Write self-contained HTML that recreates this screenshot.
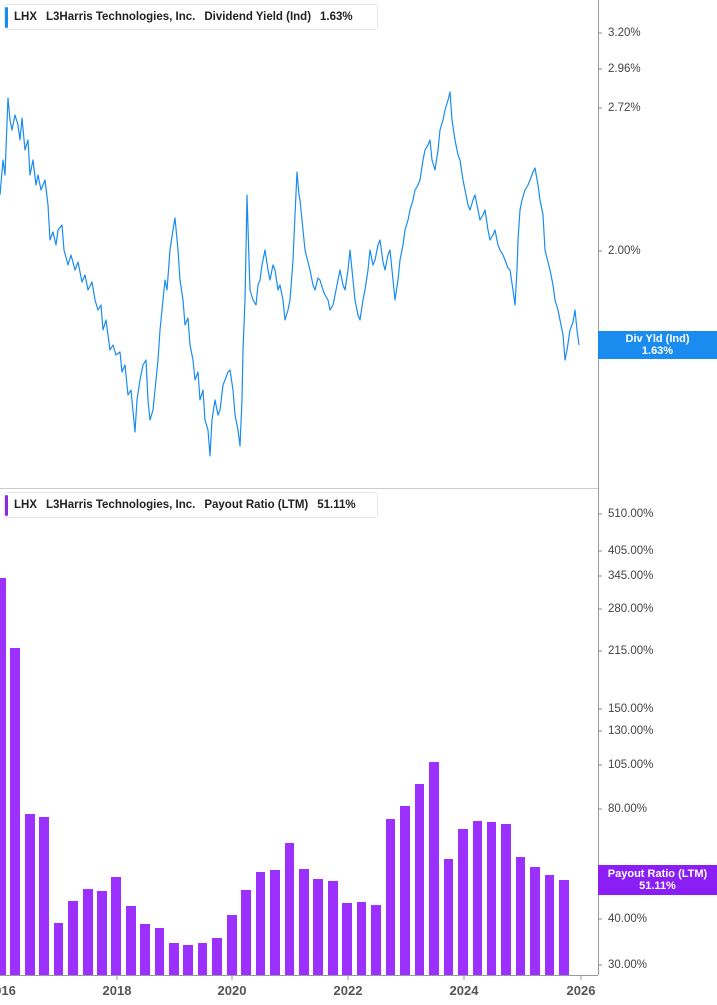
<!DOCTYPE html>
<html><head><meta charset="utf-8"><style>
body{margin:0;width:717px;height:1005px;background:#fff;font-family:"Liberation Sans",Arial,sans-serif;overflow:hidden;position:relative}
.leg{position:absolute;left:4px;height:26px;border:1px solid #e6e6e6;border-radius:3px;background:#fff;font-size:11.5px;font-weight:bold;color:#222;line-height:24px;padding-left:9px;box-sizing:border-box;white-space:nowrap;overflow:hidden}
.leg:before{content:"";position:absolute;left:0;top:2px;width:3px;height:21px;border-radius:2px}
.l1:before{background:#1a8cf0}.l2:before{background:#8a2be2}
.leg span{margin-right:9px}
.lab{position:absolute;left:608px;font-size:11.5px;color:#444;transform:translateY(-50%)}
.xl{position:absolute;top:983px;font-size:13px;font-weight:bold;color:#555;transform:translateX(-50%)}
.badge{position:absolute;left:598px;width:119px;color:#fff;font-size:11px;font-weight:bold;text-align:center;line-height:12px}
</style></head><body>
<svg width="717" height="1005" style="position:absolute;left:0;top:0">
<line x1="598.5" y1="0" x2="598.5" y2="975" stroke="#999"/>
<line x1="0" y1="488.5" x2="598" y2="488.5" stroke="#ccc"/>
<line x1="0" y1="975.5" x2="598" y2="975.5" stroke="#999"/>
<g stroke="#999">
<line x1="117" y1="975" x2="117" y2="980"/><line x1="232" y1="975" x2="232" y2="980"/><line x1="348" y1="975" x2="348" y2="980"/><line x1="464" y1="975" x2="464" y2="980"/><line x1="581" y1="975" x2="581" y2="980"/>
</g>
<g stroke="#888">
<line x1="598" y1="33" x2="602" y2="33"/><line x1="598" y1="69" x2="602" y2="69"/><line x1="598" y1="108" x2="602" y2="108"/><line x1="598" y1="251" x2="602" y2="251"/>
<line x1="598" y1="514" x2="602" y2="514"/><line x1="598" y1="551" x2="602" y2="551"/><line x1="598" y1="576" x2="602" y2="576"/><line x1="598" y1="609" x2="602" y2="609"/><line x1="598" y1="651" x2="602" y2="651"/><line x1="598" y1="709" x2="602" y2="709"/><line x1="598" y1="731" x2="602" y2="731"/><line x1="598" y1="765" x2="602" y2="765"/><line x1="598" y1="809" x2="602" y2="809"/><line x1="598" y1="919" x2="602" y2="919"/><line x1="598" y1="965" x2="602" y2="965"/>
</g>
<polyline fill="none" stroke="#1a8cf0" stroke-width="1.2" stroke-linejoin="round" points="0,195 3,160 5,175 8,98 10,120 12,130 15,115 18,125 20,140 22,118 25,150 28,140 30,175 33,160 36,185 38,175 41,190 45,180 48,205 50,240 53,232 56,245 58,230 62,225 64,250 68,265 71,255 75,270 78,262 82,282 85,275 88,290 92,282 95,300 98,310 101,305 103,330 106,320 110,350 113,345 116,355 120,352 122,372 125,365 128,395 131,390 135,432 137,400 140,380 143,365 146,360 148,400 150,420 153,410 155,390 158,360 160,330 163,300 165,280 167,290 170,250 173,230 175,218 178,250 180,280 183,300 185,325 188,318 190,345 193,360 195,380 198,372 200,400 203,390 205,420 208,430 210,456 212,420 215,400 218,415 220,410 223,385 225,380 228,372 230,370 233,390 235,415 238,430 240,446 242,400 243,350 245,300 246,250 247,195 249,260 250,290 253,300 256,305 258,285 260,280 262,265 265,250 268,270 270,280 273,265 275,270 278,290 280,285 283,300 285,320 288,310 290,300 293,260 295,215 297,172 299,195 300,200 303,230 305,250 308,262 310,270 313,285 315,290 318,278 320,280 323,290 325,295 328,300 330,310 333,305 335,295 338,280 340,270 343,285 345,290 348,270 350,250 353,280 355,300 358,315 360,320 363,300 365,290 368,270 370,250 373,265 375,260 378,245 380,240 383,262 385,270 388,255 390,250 393,280 395,300 398,280 400,260 403,245 405,230 408,220 410,210 413,200 415,190 418,185 420,180 423,160 425,150 428,145 430,140 432,160 435,170 438,150 440,130 443,120 445,110 448,100 450,92 452,120 455,140 458,155 460,160 463,180 465,190 468,205 470,210 473,200 475,195 478,210 480,220 483,215 485,210 488,230 490,240 493,235 495,230 498,245 500,250 503,255 505,260 508,268 510,270 513,290 515,305 517,270 518,240 520,210 522,200 525,190 528,185 530,180 533,172 535,168 538,185 540,200 543,215 545,250 548,262 550,270 553,285 555,300 558,310 560,320 563,335 565,360 567,350 570,330 573,322 575,310 577,330 579,345"/>
<g fill="#9b30ff">
<rect x="0" y="578" width="6" height="397"/>
<rect x="10" y="648" width="10" height="327"/>
<rect x="25" y="814" width="10" height="161"/>
<rect x="39" y="817" width="10" height="158"/>
<rect x="54" y="923" width="9" height="52"/>
<rect x="68" y="901" width="10" height="74"/>
<rect x="83" y="889" width="10" height="86"/>
<rect x="97" y="891" width="10" height="84"/>
<rect x="111" y="877" width="10" height="98"/>
<rect x="126" y="906" width="10" height="69"/>
<rect x="140" y="924" width="10" height="51"/>
<rect x="155" y="928" width="9" height="47"/>
<rect x="169" y="943" width="10" height="32"/>
<rect x="183" y="945" width="10" height="30"/>
<rect x="198" y="943" width="9" height="32"/>
<rect x="212" y="938" width="10" height="37"/>
<rect x="227" y="915" width="10" height="60"/>
<rect x="241" y="890" width="10" height="85"/>
<rect x="256" y="872" width="9" height="103"/>
<rect x="270" y="870" width="10" height="105"/>
<rect x="285" y="843" width="9" height="132"/>
<rect x="299" y="869" width="10" height="106"/>
<rect x="313" y="879" width="10" height="96"/>
<rect x="328" y="881" width="10" height="94"/>
<rect x="342" y="903" width="10" height="72"/>
<rect x="357" y="902" width="9" height="73"/>
<rect x="371" y="905" width="10" height="70"/>
<rect x="386" y="819" width="9" height="156"/>
<rect x="400" y="806" width="10" height="169"/>
<rect x="415" y="784" width="9" height="191"/>
<rect x="429" y="762" width="10" height="213"/>
<rect x="444" y="859" width="9" height="116"/>
<rect x="458" y="829" width="10" height="146"/>
<rect x="473" y="821" width="9" height="154"/>
<rect x="487" y="822" width="9" height="153"/>
<rect x="501" y="824" width="10" height="151"/>
<rect x="516" y="857" width="9" height="118"/>
<rect x="530" y="867" width="10" height="108"/>
<rect x="545" y="875" width="9" height="100"/>
<rect x="559" y="880" width="10" height="95"/>
</g>
</svg>
<div class="leg l1" style="top:4px;width:374px"><span>LHX</span><span>L3Harris Technologies, Inc.</span><span>Dividend Yield (Ind)</span><span>1.63%</span></div>
<div class="leg l2" style="top:492px;width:374px"><span>LHX</span><span>L3Harris Technologies, Inc.</span><span>Payout Ratio (LTM)</span><span>51.11%</span></div>
<div class="lab" style="top:33px">3.20%</div><div class="lab" style="top:69px">2.96%</div><div class="lab" style="top:108px">2.72%</div><div class="lab" style="top:251px">2.00%</div>
<div class="lab" style="top:514px">510.00%</div><div class="lab" style="top:551px">405.00%</div><div class="lab" style="top:576px">345.00%</div><div class="lab" style="top:609px">280.00%</div><div class="lab" style="top:651px">215.00%</div><div class="lab" style="top:709px">150.00%</div><div class="lab" style="top:731px">130.00%</div><div class="lab" style="top:765px">105.00%</div><div class="lab" style="top:809px">80.00%</div><div class="lab" style="top:919px">40.00%</div><div class="lab" style="top:965px">30.00%</div>
<div class="badge" style="top:331px;height:28px;background:#1a8cf0;padding-top:2px;box-sizing:border-box">Div Yld (Ind)<br>1.63%</div>
<div class="badge" style="top:865px;height:30px;background:#8a1ef5;padding-top:3px;box-sizing:border-box">Payout Ratio (LTM)<br>51.11%</div>
<div class="xl" style="left:5px">016</div><div class="xl" style="left:117px">2018</div><div class="xl" style="left:232px">2020</div><div class="xl" style="left:348px">2022</div><div class="xl" style="left:464px">2024</div><div class="xl" style="left:581px">2026</div>
</body></html>
